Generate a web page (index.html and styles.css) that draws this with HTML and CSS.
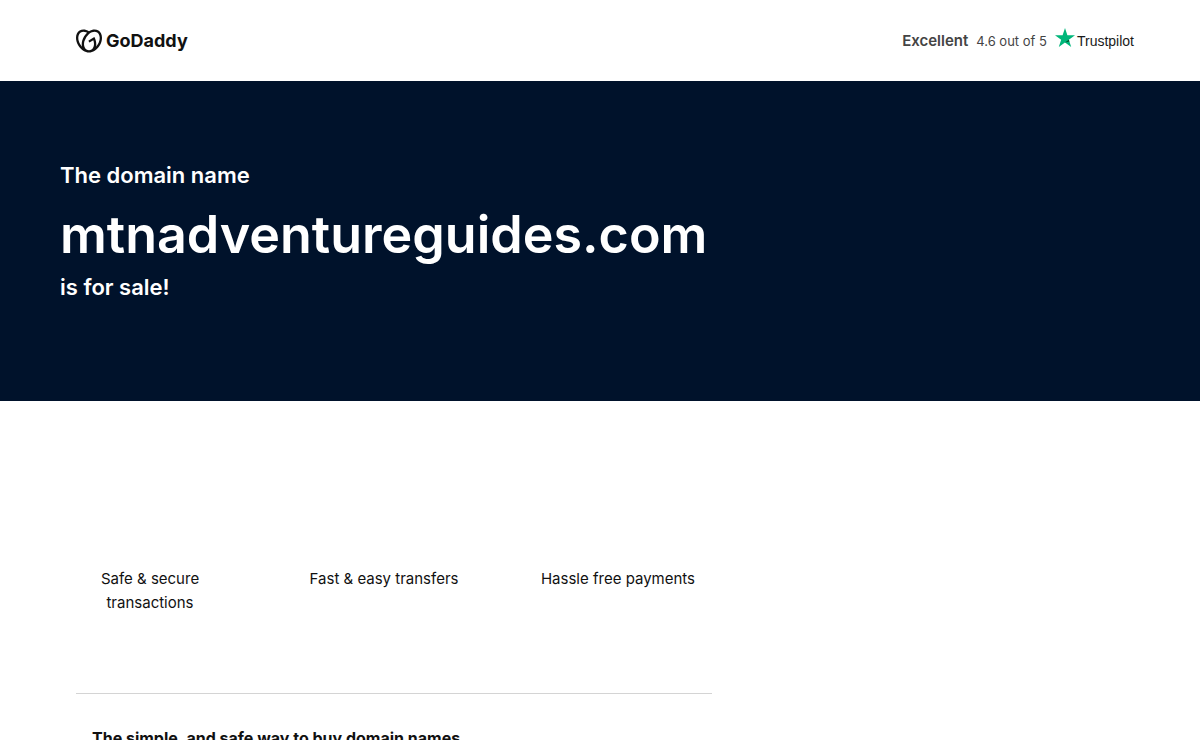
FILE: index.html
```html
<!DOCTYPE html>
<html lang="en">

<head>
    <meta charset="utf-8">
    <meta name="viewport" content="width=device-width, initial-scale=1">
    <title>mtnadventureguides.com is for sale</title>
    <link rel="stylesheet" href="styles.css">
</head>

<body>
    <header class="header">
        <a class="logo" href="#" aria-label="GoDaddy">
            <svg class="logo-mark" viewBox="0 1 24 22" aria-hidden="true">
                <path d="M20.702 2.29c-2.494-1.554-5.778-1.187-8.706.654C9.076 1.104 5.79.736 3.3 2.29c-3.941 2.463-4.42 8.806-1.07 14.167 2.47 3.954 6.333 6.269 9.77 6.226 3.439.043 7.301-2.273 9.771-6.226 3.347-5.361 2.872-11.704-1.069-14.167zM4.042 15.328a12.838 12.838 0 01-1.546-3.541 10.12 10.12 0 01-.336-3.338c.15-1.98.956-3.524 2.27-4.345 1.315-.822 3.052-.87 4.903-.137.281.113.556.24.825.382A15.11 15.11 0 007.5 7.54c-2.035 3.255-2.655 6.878-1.945 9.765a13.247 13.247 0 01-1.514-1.98zm17.465-3.541a12.866 12.866 0 01-1.547 3.54 13.25 13.25 0 01-1.513 1.984c.635-2.589.203-5.76-1.353-8.734a.39.39 0 00-.563-.153l-4.852 3.032a.397.397 0 00-.126.546l.712 1.139a.395.395 0 00.547.126l3.145-1.965c.101.306.203.606.28.916.296 1.086.41 2.214.335 3.337-.15 1.982-.956 3.525-2.27 4.347a4.437 4.437 0 01-2.25.65h-.101a4.432 4.432 0 01-2.25-.65c-1.314-.822-2.121-2.365-2.27-4.347-.074-1.123.039-2.251.335-3.337a13.212 13.212 0 014.05-6.482 10.148 10.148 0 012.849-1.765c1.845-.733 3.586-.685 4.9.137 1.316.822 2.122 2.365 2.271 4.345a10.146 10.146 0 01-.334 3.337z"/>
            </svg>
            <span>GoDaddy</span>
        </a>
        <div class="rating">
            <strong>Excellent</strong>
            <span class="score">4.6 out of 5</span>
            <a class="trustpilot" href="#">
                <svg class="star" viewBox="0 0 20 19" aria-hidden="true">
                    <path fill="#00b67a" d="M10 0l2.400 7.250H20l-6.150 4.500L16.200 19 10 14.500 3.800 19l2.350-7.250L0 7.250h7.600z"/>
                    <path fill="#005128" d="M14.400 13.400l-.55-1.650L10 14.500z"/>
                </svg>
                <span>Trustpilot</span>
            </a>
        </div>
    </header>

    <section class="hero">
        <h1>
            <span class="lead">The domain name</span>
            <span class="domain">mtnadventureguides.com</span>
            <span class="lead">is for sale!</span>
        </h1>
    </section>

    <main class="content">
        <ul class="benefits">
            <li>Safe &amp; secure transactions</li>
            <li>Fast &amp; easy transfers</li>
            <li>Hassle free payments</li>
        </ul>
        <section class="about">
            <h2>The simple, and safe way to buy domain names</h2>
        </section>
    </main>
</body>

</html>
```
FILE: styles.css
```css
* {
    box-sizing: border-box;
}

body {
    margin: 0;
    font-family: Inter, "Liberation Sans", sans-serif;
    font-size: 15px;
    line-height: 24px;
    color: #111;
    background-color: #fff;
}

a {
    color: inherit;
    text-decoration: none;
}

.header {
    display: flex;
    justify-content: space-between;
    align-items: center;
    height: 81px;
    padding: 0 66px 0 76px;
}

.logo {
    display: flex;
    align-items: center;
    gap: 4px;
    font-size: 18px;
    font-weight: 700;
}

.logo-mark {
    width: 26px;
    height: 24px;
    fill: #111;
}

.rating {
    display: flex;
    align-items: center;
    gap: 8px;
    color: #444;
}

.rating strong {
    font-weight: 600;
}

.score {
    font-size: 13px;
}

.trustpilot {
    display: flex;
    align-items: center;
    gap: 2px;
    font-family: "Liberation Sans", sans-serif;
    font-size: 14px;
    color: #191919;
}

.star {
    width: 20px;
    height: 19px;
    margin-bottom: 6px;
}

.hero {
    padding: 80px 60px 100px;
    background-color: #00122b;
    color: #fff;
}

.hero h1 {
    margin: 0;
    font-weight: 600;
}

.hero span {
    display: block;
}

.lead {
    font-size: 22px;
    line-height: 28px;
}

.domain {
    padding: 12px 0 4px;
    font-size: 52px;
    line-height: 68px;
}

.content {
    max-width: 772px;
    padding: 166px 60px 0;
}

.benefits {
    display: flex;
    gap: 54px;
    margin: 0;
    padding: 0;
    list-style: none;
    text-align: center;
}

.benefits li {
    flex: 0 0 180px;
}

.about {
    margin: 78px 0 0 16px;
    padding: 32px 16px;
    border-top: 1px solid #d4d4d4;
}

.about h2 {
    margin: 0;
    font-size: 16px;
    font-weight: 700;
}
```
